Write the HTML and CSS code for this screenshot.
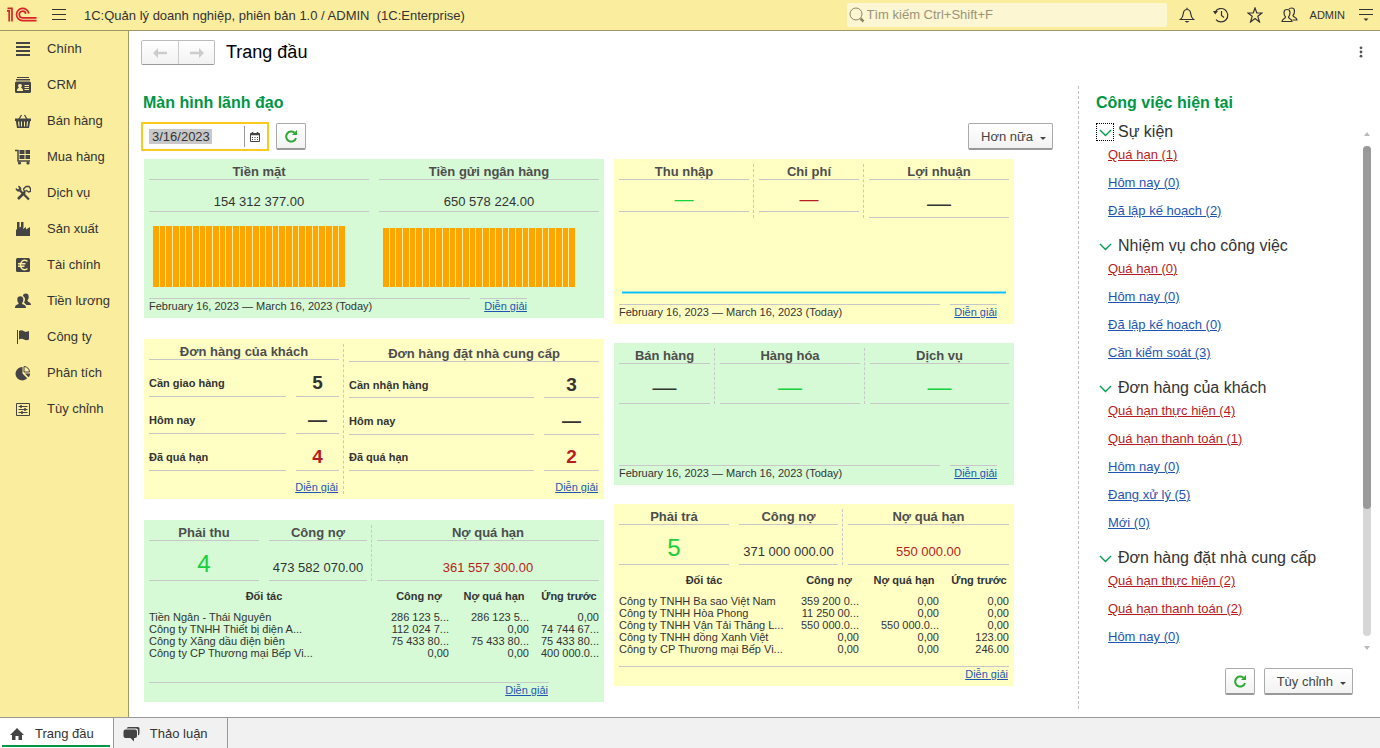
FILE: index.html
```html
<!DOCTYPE html>
<html lang="vi">
<head>
<meta charset="utf-8">
<title>1C:Quản lý doanh nghiệp</title>
<link rel="stylesheet" href="styles.css">
</head>
<body>
<header class="topbar">
  <svg class="logo" width="30" height="16" viewBox="0 0 30 16" fill="none" stroke="#d8232a" stroke-width="1.700"><path d="M0 3.800h2.200V14.500M.5 1.400H5V14.500"/><path d="M21.800 6.500A6.200 6.200 0 1 0 15.600 13.700H29.500"/><path d="M18.800 6.800A3.300 3.300 0 1 0 15.600 10.800H29.500"/></svg>
  <button class="icon-btn menu-btn" aria-label="Menu"><svg width="16" height="12" viewBox="0 0 16 12" stroke="#333" stroke-width="1"><path d="M1 .5h14M1 5.500h14M1 10.500h14"/></svg></button>
  <span class="app-title">1C:Quản lý doanh nghiệp, phiên bản 1.0 / ADMIN &nbsp;(1C:Enterprise)</span>
  <label class="search"><svg width="16" height="16" viewBox="0 0 16 16" fill="none" stroke="#8d8769"><circle cx="7" cy="7" r="6"/><path d="M11.500 11.500l3 3" stroke-width="2.500"/></svg><input type="text" placeholder="Tìm kiếm Ctrl+Shift+F" aria-label="Tìm kiếm"></label>
  <nav class="tools">
    <button class="icon-btn" aria-label="Thông báo"><svg width="16" height="16" viewBox="0 0 16 16" fill="none" stroke="#333" stroke-width="1.200"><path d="M1.500 12.500h13c-2-1.500-2.500-3-2.800-6C11.400 4 10 2.500 8 2.500S4.600 4 4.300 6.500c-.3 3-.8 4.500-2.800 6zM8 2.500V.8"/><path d="M5.500 14h5L8 15.800z" fill="#333" stroke="none"/></svg></button>
    <button class="icon-btn" aria-label="Lịch sử"><svg width="16" height="16" viewBox="0 0 16 16" fill="none" stroke="#333" stroke-width="1.200"><path d="M2.200 5A6.700 6.700 0 1 1 3 12.600M8.500 4v4.500l2.500 2"/><path d="M0 4h5L2.200 7.500z" fill="#333" stroke="none"/></svg></button>
    <button class="icon-btn" aria-label="Ưa thích"><svg width="16" height="16" viewBox="0 0 16 16" fill="none" stroke="#333" stroke-width="1.200"><path d="M8 1l1.800 5H15l-4.200 3.300L12.500 15 8 11.600 3.500 15l1.700-5.700L1 6h5.200z"/></svg></button>
    <button class="icon-btn" aria-label="Người dùng"><svg width="17" height="16" viewBox="0 0 17 16" fill="none" stroke="#333" stroke-width="1.200"><path d="M1 14.500c0-3 3.500-2.500 3.500-4.500C3 8.500 3 7 3 5.500 3 3.600 4.200 2.500 6 2.500s3 1.100 3 3C9 7 9 8.500 7.500 10c0 2 3.500 1.500 3.500 4.500z"/><path d="M8 2.200C8.500 1.300 9.400 1 10.500 1c2 0 3 1.200 3 3 0 1.500 0 3-1.500 4.500 0 2 4 1.500 4 4.500h-4.500"/></svg></button>
    <span class="user">ADMIN</span>
    <button class="icon-btn" aria-label="Tùy chọn"><svg width="16" height="14" viewBox="0 0 16 14"><path d="M1 1.500h14M1 6.500h14" stroke="#333"/><path d="M5.500 10.500h5L8 13z" fill="#333"/></svg></button>
  </nav>
</header>

<div class="workspace">
  <nav class="sidebar">
    <a href="#"><svg width="16" height="16" viewBox="0 0 16 16"><path d="M1 1h14v2H1zM1 5h14v2H1zM1 9h14v2H1zM1 13h14v2H1z"/></svg>Chính</a>
    <a href="#"><svg width="16" height="16" viewBox="0 0 16 16"><path d="M2 0h12v1H2zM1 2h14v1.500H1z"/><path fill-rule="evenodd" d="M0 6q0-1.500 1.500-1.500h13Q16 4.500 16 6v8.500q0 1.500-1.500 1.500h-13Q0 16 0 14.500zM5 7a1.700 1.700 0 0 0-1 3.200L2 12.500V14h6v-1.500l-2-2.300A1.700 1.700 0 0 0 5 7zM9.500 8v1H14V8zM9.500 10v1H14v-1zM9.500 12v1H14v-1z"/></svg>CRM</a>
    <a href="#"><svg width="16" height="16" viewBox="0 0 16 16"><path d="M4 6L6.500 2M12 6L9.500 2" stroke="#444" stroke-width="1.300"/><path fill-rule="evenodd" d="M0 5.500h16V8h-.8L14 15H2L.8 8H0zM3 8.500l.6 5h1l-.4-5zM6 8.500v5h1v-5zM9 8.500v5h1v-5zM12 8.500l-.5 5h1l.6-5z"/></svg>Bán hàng</a>
    <a href="#"><svg width="16" height="16" viewBox="0 0 16 16"><path d="M0 1.500h3V12h12" fill="none" stroke="#444" stroke-width="1.500"/><path d="M4.500 1h5v4h-5zM10.500 1H15v4h-4.500zM4.500 6h5v4h-5zM10.500 6H15v4h-4.500z"/><circle cx="4.500" cy="14" r="1.600"/><circle cx="13" cy="14" r="1.600"/></svg>Mua hàng</a>
    <a href="#"><svg width="16" height="16" viewBox="0 0 16 16" fill="none" stroke="#444"><path d="M5 5.500l9 9" stroke-width="2.200"/><path d="M1 3.500C1 6 3.500 7 5.500 5.500 6.500 4 6 1.500 3.500 1.200L4.500 3.500 3 4.800z" fill="#444" stroke-width=".8"/><path d="M10 7L3 14" stroke-width="2.500"/><path d="M8.500 4l2.500-2.500h3l1.500 2v3l-2 .5-2-1.500-2 1z" stroke-width="1.300"/></svg>Dịch vụ</a>
    <a href="#"><svg width="16" height="16" viewBox="0 0 16 16"><path d="M1 15V9l1-1V1h2.500v5.500L6 5.700V1h2.500v5L8 8l3-2v2.500L15 6v9z"/></svg>Sản xuất</a>
    <a href="#"><svg width="16" height="16" viewBox="0 0 16 16"><rect x="1" y="1" width="14" height="14" rx="1.500"/><path d="M12.500 4.300C8.500 1.800 5.500 4.500 5.500 8s3 6.200 7 3.700M3 6.800h7.500M3 9.200h6.500" fill="none" stroke="#fbed9e" stroke-width="1.400"/></svg>Tài chính</a>
    <a href="#"><svg width="16" height="16" viewBox="0 0 16 16"><path d="M8 3C8 1.300 9.200.5 10.800.5c1.800 0 2.900 1.200 2.900 3 0 1.600-.3 2.800-1.300 4 .2 1.700 3.600 1.500 3.600 4.500h-4.500L9 9.500c1.500-2 1.500-5-1-6.500z"/><path d="M0 15c0-4 3.600-3 3.600-4.800C2.600 9 2.300 7.800 2.300 6.200c0-1.800 1.100-3 3-3s3 1.200 3 3c0 1.600-.3 2.800-1.300 4C7 12 11 11 11 15z"/></svg>Tiền lương</a>
    <a href="#"><svg width="16" height="16" viewBox="0 0 16 16"><path d="M2 1h1v14H2zM4 2c2-1.500 3.500-.5 5 .2s3 .8 5-.2v8.500c-2 1.200-3.500.8-5 0s-3-1.200-5 0z"/></svg>Công ty</a>
    <a href="#"><svg width="16" height="16" viewBox="0 0 16 16"><path d="M7.500 2v6.500l4.700 4.700A6.700 6.700 0 1 1 7.500 2z"/><path d="M9 1.500A6 6 0 0 1 14.500 7H9z" fill="none" stroke="#444"/><path d="M10 8.500h5.200a6 6 0 0 1-1.700 3.700z"/></svg>Phân tích</a>
    <a href="#"><svg width="16" height="16" viewBox="0 0 16 16" fill="none" stroke="#444"><path d="M1.500 2.500h13v12h-13zM3.500 5.500h9M3.500 8.500h9M3.500 11.500h9"/><path d="M6 4.200v2.600M10 7.200v2.600M7 10.200v2.600" stroke-width="2"/></svg>Tùy chỉnh</a>
  </nav>

  <main class="main">
    <div class="page-head">
      <div class="history">
        <button aria-label="Quay lại"><svg width="14" height="10" viewBox="0 0 14 10"><path d="M0 5l5-5v3.800h9v2.400H5V10z" fill="#ccc"/></svg></button>
        <button aria-label="Tiếp"><svg width="14" height="10" viewBox="0 0 14 10"><path d="M14 5L9 0v3.800H0v2.400h9V10z" fill="#ccc"/></svg></button>
      </div>
      <h1>Trang đầu</h1>
      <button class="icon-btn kebab" aria-label="Thêm"><svg width="4" height="12" viewBox="0 0 4 12" fill="#555"><circle cx="2" cy="1.800" r="1.400"/><circle cx="2" cy="6" r="1.400"/><circle cx="2" cy="10.200" r="1.400"/></svg></button>
    </div>

    <div class="panes">
      <section class="dashboard">
        <h2>Màn hình lãnh đạo</h2>
        <div class="toolbar">
          <div class="date-field">
            <input type="text" value="3/16/2023" aria-label="Ngày">
            <button aria-label="Chọn ngày"><svg width="10" height="10" viewBox="0 0 10 10" fill="none" stroke="#444"><path d="M.5 1.500h9v8h-9z"/><path d="M0 2.500h10M2.500 0v2M7.500 0v2" stroke-width="1.500"/><path d="M2 5.500h6M2 7.500h6" stroke-dasharray="1 1.500"/></svg></button>
          </div>
          <button class="btn square" aria-label="Làm mới"><svg width="14" height="14" viewBox="0 0 14 14"><path d="M10.500 3.800A5 5 0 1 0 12 9" fill="none" stroke="#2ea836" stroke-width="2"/><path d="M13 1v5H8z" fill="#2ea836"/></svg></button>
          <button class="btn more">Hơn nữa<span class="caret"></span></button>
        </div>

        <div class="cards">
          <div class="card-col">
            <article class="card green">
              <div class="metrics two">
                <div class="metric"><h3>Tiền mặt</h3><p class="value">154 312 377.00</p>
                  <div class="bars"><i></i><i></i><i></i><i></i><i></i><i></i><i></i><i></i><i></i><i></i><i></i><i></i><i></i><i></i><i></i><i></i><i></i><i></i><i></i><i></i><i></i><i></i><i></i><i></i><i></i><i></i><i></i><i></i><i></i></div></div>
                <div class="metric"><h3>Tiền gửi ngân hàng</h3><p class="value">650 578 224.00</p>
                  <div class="bars lower"><i></i><i></i><i></i><i></i><i></i><i></i><i></i><i></i><i></i><i></i><i></i><i></i><i></i><i></i><i></i><i></i><i></i><i></i><i></i><i></i><i></i><i></i><i></i><i></i><i></i><i></i><i></i><i></i><i></i></div></div>
              </div>
              <footer class="period wide"><span>February 16, 2023 — March 16, 2023 (Today)</span><a href="#">Diễn giải</a></footer>
            </article>

            <article class="card yellow flush">
              <div class="metrics orders">
                <div class="order">
                  <h3>Đơn hàng của khách</h3>
                  <dl>
                    <div><dt>Cần giao hàng</dt><dd>5</dd></div>
                    <div><dt>Hôm nay</dt><dd>—</dd></div>
                    <div><dt>Đã quá hạn</dt><dd class="red">4</dd></div>
                  </dl>
                  <a href="#">Diễn giải</a>
                </div>
                <span class="sep"></span>
                <div class="order supplier">
                  <h3>Đơn hàng đặt nhà cung cấp</h3>
                  <dl>
                    <div><dt>Cần nhận hàng</dt><dd>3</dd></div>
                    <div><dt>Hôm nay</dt><dd>—</dd></div>
                    <div><dt>Đã quá hạn</dt><dd class="red">2</dd></div>
                  </dl>
                  <a href="#">Diễn giải</a>
                </div>
              </div>
            </article>

            <article class="card green">
              <div class="metrics receivable">
                <div class="metric"><h3>Phải thu</h3><p class="value big lime">4</p></div>
                <div class="metric"><h3>Công nợ</h3><p class="value tall">473 582 070.00</p></div>
                <span class="sep"></span>
                <div class="metric"><h3>Nợ quá hạn</h3><p class="value tall red">361 557 300.00</p></div>
              </div>
              <table>
                <colgroup><col><col class="c70"><col class="c80"><col class="c70"></colgroup>
                <thead><tr><th>Đối tác</th><th>Công nợ</th><th>Nợ quá hạn</th><th>Ứng trước</th></tr></thead>
                <tbody>
                  <tr><td>Tiền Ngân - Thái Nguyên</td><td>286 123 5...</td><td>286 123 5...</td><td>0,00</td></tr>
                  <tr><td>Công ty TNHH Thiết bị điện A...</td><td>112 024 7...</td><td>0,00</td><td>74 744 67...</td></tr>
                  <tr><td>Công ty Xăng dầu điện biên</td><td>75 433 80...</td><td>75 433 80...</td><td>75 433 80...</td></tr>
                  <tr><td>Công ty CP Thương mại Bếp Vi...</td><td>0,00</td><td>0,00</td><td>400 000.0...</td></tr>
                </tbody>
              </table>
              <footer class="detail short"><a href="#">Diễn giải</a></footer>
            </article>
          </div>

          <div class="card-col right">
            <article class="card yellow">
              <div class="metrics income">
                <div class="metric"><h3>Thu nhập</h3><p class="value dash lime">—</p></div>
                <span class="sep"></span>
                <div class="metric"><h3>Chi phí</h3><p class="value dash red">—</p></div>
                <span class="sep"></span>
                <div class="metric"><h3>Lợi nhuận</h3><p class="value profit">—</p></div>
              </div>
              <div class="flatline"></div>
              <footer class="period"><span>February 16, 2023 — March 16, 2023 (Today)</span><a href="#">Diễn giải</a></footer>
            </article>

            <article class="card green">
              <div class="metrics sales">
                <div class="metric"><h3>Bán hàng</h3><p class="value big">—</p></div>
                <span class="sep"></span>
                <div class="metric"><h3>Hàng hóa</h3><p class="value big lime">—</p></div>
                <span class="sep"></span>
                <div class="metric"><h3>Dịch vụ</h3><p class="value big lime">—</p></div>
              </div>
              <footer class="period spaced"><span>February 16, 2023 — March 16, 2023 (Today)</span><a href="#">Diễn giải</a></footer>
            </article>

            <article class="card yellow">
              <div class="metrics payable">
                <div class="metric"><h3>Phải trả</h3><p class="value big lime">5</p></div>
                <div class="metric"><h3>Công nợ</h3><p class="value tall">371 000 000.00</p></div>
                <span class="sep"></span>
                <div class="metric"><h3>Nợ quá hạn</h3><p class="value tall red">550 000.00</p></div>
              </div>
              <table>
                <colgroup><col><col class="c70"><col class="c80"><col class="c70"></colgroup>
                <thead><tr><th>Đối tác</th><th>Công nợ</th><th>Nợ quá hạn</th><th>Ứng trước</th></tr></thead>
                <tbody>
                  <tr><td>Công ty TNHH Ba sao Việt Nam</td><td>359 200 0...</td><td>0,00</td><td>0,00</td></tr>
                  <tr><td>Công ty TNHH Hòa Phong</td><td>11 250 00...</td><td>0,00</td><td>0,00</td></tr>
                  <tr><td>Công ty TNHH Vận Tải Thăng L...</td><td>550 000.0...</td><td>550 000.0...</td><td>0,00</td></tr>
                  <tr><td>Công ty TNHH đồng Xanh Việt</td><td>0,00</td><td>0,00</td><td>123.00</td></tr>
                  <tr><td>Công ty CP Thương mại Bếp Vi...</td><td>0,00</td><td>0,00</td><td>246.00</td></tr>
                </tbody>
              </table>
              <footer class="detail"><a href="#">Diễn giải</a></footer>
            </article>
          </div>
        </div>
      </section>

      <aside class="tasks">
        <h2>Công việc hiện tại</h2>
        <div class="task-body">
          <div class="task-list">
            <section>
              <h3><button class="chev focused" aria-label="Thu gọn"><svg width="13" height="8" viewBox="0 0 13 8" fill="none" stroke="#00a050" stroke-width="1.400"><path d="M1 1l5.500 5.500L12 1"/></svg></button>Sự kiện</h3>
              <ul><li><a class="red" href="#">Quá hạn (1)</a></li><li><a href="#">Hôm nay (0)</a></li><li><a href="#">Đã lập kế hoạch (2)</a></li></ul>
            </section>
            <section>
              <h3><button class="chev" aria-label="Thu gọn"><svg width="13" height="8" viewBox="0 0 13 8" fill="none" stroke="#00a050" stroke-width="1.400"><path d="M1 1l5.500 5.500L12 1"/></svg></button>Nhiệm vụ cho công việc</h3>
              <ul><li><a class="red" href="#">Quá hạn (0)</a></li><li><a href="#">Hôm nay (0)</a></li><li><a href="#">Đã lập kế hoạch (0)</a></li><li><a href="#">Cần kiểm soát (3)</a></li></ul>
            </section>
            <section>
              <h3><button class="chev" aria-label="Thu gọn"><svg width="13" height="8" viewBox="0 0 13 8" fill="none" stroke="#00a050" stroke-width="1.400"><path d="M1 1l5.500 5.500L12 1"/></svg></button>Đơn hàng của khách</h3>
              <ul><li><a class="red" href="#">Quá hạn thực hiện (4)</a></li><li><a class="red" href="#">Quá hạn thanh toán (1)</a></li><li><a href="#">Hôm nay (0)</a></li><li><a href="#">Đang xử lý (5)</a></li><li><a href="#">Mới (0)</a></li></ul>
            </section>
            <section>
              <h3><button class="chev" aria-label="Thu gọn"><svg width="13" height="8" viewBox="0 0 13 8" fill="none" stroke="#00a050" stroke-width="1.400"><path d="M1 1l5.500 5.500L12 1"/></svg></button>Đơn hàng đặt nhà cung cấp</h3>
              <ul><li><a class="red" href="#">Quá hạn thực hiện (2)</a></li><li><a class="red" href="#">Quá hạn thanh toán (2)</a></li><li><a href="#">Hôm nay (0)</a></li></ul>
            </section>
          </div>
          <div class="scrollbar"><span class="arrow up"></span><span class="track"><span class="thumb"></span></span><span class="arrow down"></span></div>
        </div>
        <div class="task-actions">
          <button class="btn square" aria-label="Làm mới"><svg width="14" height="14" viewBox="0 0 14 14"><path d="M10.500 3.800A5 5 0 1 0 12 9" fill="none" stroke="#2ea836" stroke-width="2"/><path d="M13 1v5H8z" fill="#2ea836"/></svg></button>
          <button class="btn">Tùy chỉnh<span class="caret"></span></button>
        </div>
      </aside>
    </div>
  </main>
</div>

<nav class="tabs">
  <a class="tab active" href="#"><svg width="16" height="14" viewBox="0 0 16 14"><path d="M8 1l7 7h-2v5H9.500V9h-3v4H3V8H1z" fill="#444"/></svg>Trang đầu</a>
  <a class="tab" href="#"><svg width="17" height="16" viewBox="0 0 17 16" fill="#444"><path d="M5.500 1H15q1.500 0 1.500 1.500V7q0 2-1.500 2.500V4.500Q15 2.500 13 2.500H3.500Q4 1 5.500 1z"/><path d="M2.500 3.500H12q2 0 2 2V10q0 2-2 2h-1v3.500L7.500 12h-5q-2 0-2-2V5.500q0-2 2-2z"/></svg>Thảo luận</a>
</nav>
</body>
</html>
```

FILE: styles.css
```css
* { box-sizing: border-box; }
body {
  margin: 0;
  min-height: 100vh;
  display: flex;
  flex-direction: column;
  background: #fff;
  color: #333;
  font: 13px/20px "Liberation Sans", Arial, sans-serif;
}
h1, h2, h3, p, dl, dd, ul { margin: 0; padding: 0; }
ul { list-style: none; }
button { font: inherit; color: inherit; cursor: pointer; }
svg { display: block; flex: none; }
a { color: #1e55b0; }
.red { color: #b81c22; }
.lime { color: #14d13c; }

.icon-btn { display: flex; align-items: center; justify-content: center; padding: 0; border: 0; background: none; }

/* top bar */
.topbar {
  display: flex;
  align-items: center;
  height: 31px;
  padding: 0 7px;
  background: #fbed9e;
  border-bottom: 1px solid #9c9868;
}
.menu-btn { margin-left: 14px; }
.app-title { margin-left: 17px; padding-top: 2px; white-space: nowrap; }
.search {
  display: flex;
  align-items: center;
  width: 320px;
  height: 24px;
  margin-left: auto;
  padding-left: 2px;
  border-radius: 2px;
  background: #fdf6d2;
}
.search input { flex: 1; min-width: 0; padding: 0 2px; border: 0; background: none; font: inherit; outline: 0; }
.search input::placeholder { color: #9a9478; opacity: 1; }
.tools { display: flex; align-items: center; gap: 18px; margin-left: 12px; }
.user { margin: 0 -5px 0 -6px; font-size: 11px; }
.tools .icon-btn:last-child { margin-right: -1px; }

.workspace { flex: 1; display: flex; min-height: 0; }

/* section navigation */
.sidebar { width: 129px; flex: none; background: #fbed9e; border-right: 1px solid #9c9868; }
.sidebar a {
  display: flex;
  align-items: center;
  gap: 16px;
  height: 36px;
  padding-left: 15px;
  color: #333;
  text-decoration: none;
}
.sidebar svg { fill: #444; }
.sidebar svg[fill="none"] { fill: none; }

/* page */
.main { flex: 1; min-width: 0; display: flex; flex-direction: column; padding-bottom: 8px; }
.page-head { display: flex; align-items: flex-start; height: 55px; padding: 9px 17px 0 12px; }
.history { display: flex; border: 1px solid #bbb; border-bottom-color: #999; border-radius: 2px; }
.history button {
  display: flex;
  align-items: center;
  justify-content: center;
  width: 36px;
  height: 23px;
  padding: 0;
  border: 0;
  background: linear-gradient(#fff, #f2f2f2);
}
.history button + button { border-left: 1px solid #ccc; }
h1 { margin-left: 11px; font-size: 18px; line-height: 24px; font-weight: 400; color: #000; }
.kebab { margin: 6px 0 0 auto; }
h2 { font-size: 16px; line-height: 20px; font-weight: 700; color: #009646; }

.panes { flex: 1; display: flex; }
.dashboard { flex: 1; min-width: 0; padding: 7px 25px 0 12px; }
.dashboard h2 { padding-left: 2px; }
.toolbar { display: flex; align-items: center; gap: 7px; margin-top: 9px; }
.date-field { display: flex; align-items: center; width: 128px; height: 29px; border: 2px solid #fcc91f; background: #fff; }
.date-field input {
  flex: 1;
  min-width: 0;
  height: 21px;
  padding: 0 9px;
  border: 0;
  border-right: 1px solid #999;
  outline: 0;
  font: inherit;
  color: #333;
  background: linear-gradient(#c8c8c8, #c8c8c8) 6px 3px / 63px 15px no-repeat;
}
.date-field button { display: flex; padding: 0 7px 0 5px; border: 0; background: none; }
.btn {
  display: flex;
  align-items: center;
  gap: 7px;
  height: 27px;
  padding: 1px 6px 0 12px;
  border: 1px solid #aaa;
  border-bottom: 2px solid #999;
  border-radius: 2px;
  background: linear-gradient(#fff, #f2f2f2);
  color: #444;
}
.btn.square { width: 30px; padding: 0; justify-content: center; }
.btn.more { margin-left: auto; }
.caret { margin-top: 4px; border: 3px solid transparent; border-top-color: #444; border-bottom: 0; }

/* cards */
.cards { display: grid; grid-template-columns: 46fr 40fr; gap: 10px; margin: 8px 39px 0 3px; }
.card-col { display: flex; flex-direction: column; gap: 21px; }
.card-col.right { gap: 19px; }
.card { padding: 0 5px 4px; }
.card.flush { padding-bottom: 0; }
.card.green { background: #d5fad5; }
.card.yellow { background: #ffffc4; }
.metrics { display: grid; }
.two { grid-template-columns: 1fr 1fr; column-gap: 10px; }
.income { grid-template-columns: 130fr 10px 100fr 10px 140fr; }
.sales { grid-template-columns: 91fr 10px 140fr 10px 139fr; }
.orders { grid-template-columns: 190fr 10px 250fr; }
.receivable { grid-template-columns: 110fr 108fr 10px 222fr; }
.payable { grid-template-columns: 110fr 109fr 10px 161fr; }
.receivable .metric:nth-child(2), .payable .metric:nth-child(2) { margin-left: 10px; }
.sep { margin: 5px 0 0 4px; border-left: 1px dashed #c8c8c8; }
.orders .sep { margin-bottom: 5px; }
.card h3 {
  padding-top: 5px;
  border-bottom: 1px solid #c8c8c8;
  font-size: 13px;
  line-height: 15px;
  text-align: center;
  color: #4d4d4d;
}
.value { padding-top: 13px; border-bottom: 1px solid #c8c8c8; line-height: 18px; text-align: center; white-space: nowrap; }
.value.dash { padding: 9px 0 2px; font-size: 19px; line-height: 20px; }
.value.profit { padding: 10px 0 1px; font-size: 24px; line-height: 26px; }
.value.big { padding: 10px 0 3px; font-size: 24px; line-height: 26px; }
.value.tall { padding: 18px 0 3px; }

.bars { display: flex; align-items: flex-end; gap: 1px; height: 61px; margin: 14px 24px 0 4px; background: linear-gradient(#f4f0a8, #f4f0a8) bottom / 100% 61px no-repeat; }
.bars i { flex: 1; height: 61px; background: #ffa500; }
.bars.lower { background-size: 100% 59px; }
.bars.lower i { height: 59px; }
.flatline { height: 3px; margin: 73px 3px 0; border: solid #8fe0e0; border-width: 1px 0; background: #00bfff; }

.period { display: flex; gap: 10px; margin: 10px 12px 0 0; font-size: 11px; line-height: 15px; }
.period.wide { margin: 11px 72px 0 0; }
.period.spaced { margin-top: 61px; }
.period span, .period a { border-top: 1px solid #c8c8c8; }
.period span { flex: 1; }
.period a { width: 47px; text-align: right; }

.order { display: flex; flex-direction: column; height: 160px; }
.order dl { flex: 1; display: flex; flex-direction: column; }
.order dl div { flex: 1; display: grid; grid-template-columns: 1fr 43px; gap: 10px; }
.order.supplier h3 { padding-top: 7px; }
.order.supplier dl div { grid-template-columns: 1fr 55px; }
.order dt, .order dd { display: flex; align-items: center; padding-top: 10px; border-bottom: 1px solid #c8c8c8; font-weight: 700; }
.order dt { font-size: 11px; }
.order dd { justify-content: center; font-size: 19px; }
.order > a { align-self: flex-end; padding: 9px 1px 4px 0; font-size: 11px; line-height: 15px; }

table { width: 100%; table-layout: fixed; border-collapse: collapse; font-size: 11px; line-height: 12px; }
.c70 { width: 70px; }
.c80 { width: 80px; }
th { height: 30px; padding: 0 0 0 10px; }
td { padding: 0; text-align: right; white-space: nowrap; }
th:first-child { padding: 0; }
td:first-child { text-align: left; }
.detail { margin-top: 11px; padding-right: 1px; border-top: 1px solid #c8c8c8; font-size: 11px; line-height: 15px; text-align: right; }
.detail.short { margin: 23px 50px 0 0; }

/* current tasks */
.tasks { width: 302px; flex: none; display: flex; flex-direction: column; padding: 7px 9px 14px 17px; border-left: 1px dashed #c0c0c0; }
.task-body { display: flex; margin-top: 9px; }
.task-list { flex: 1; }
.task-list section + section { margin-top: 11px; }
.task-list h3 { display: flex; align-items: center; gap: 4px; font-size: 16px; line-height: 19px; font-weight: 400; }
.chev { display: flex; align-items: center; justify-content: center; width: 18px; height: 18px; padding: 2px 0 0; border: 1px solid transparent; background: none; }
.chev.focused { border: 1px dotted #000; }
.task-list li { height: 28px; padding-left: 12px; line-height: 28px; }
.scrollbar { display: flex; flex-direction: column; align-items: center; gap: 10px; width: 8px; padding: 10px 0 1px; }
.arrow { border: 3px solid transparent; }
.arrow.up { border-top: 0; border-bottom: 4px solid #bbb; }
.arrow.down { border-bottom: 0; border-top: 4px solid #bbb; }
.track { flex: 1; width: 8px; border-radius: 4px; background: #d6d6d6; }
.thumb { display: block; height: 74%; border-radius: 4px; background: #999; }
.task-actions { display: flex; justify-content: flex-end; gap: 9px; margin: auto 18px 0 0; }

/* window tabs */
.tabs { display: flex; height: 31px; border-top: 1px solid #999; background: #f1f1f1; }
.tab { display: flex; align-items: center; gap: 10px; padding: 2px 19px 0 9px; border-right: 1px solid #999; color: #333; text-decoration: none; }
.tab.active {
  background: linear-gradient(#009646, #009646) 2px 27px / calc(100% - 5px) 2px no-repeat, #fff;
}
```
